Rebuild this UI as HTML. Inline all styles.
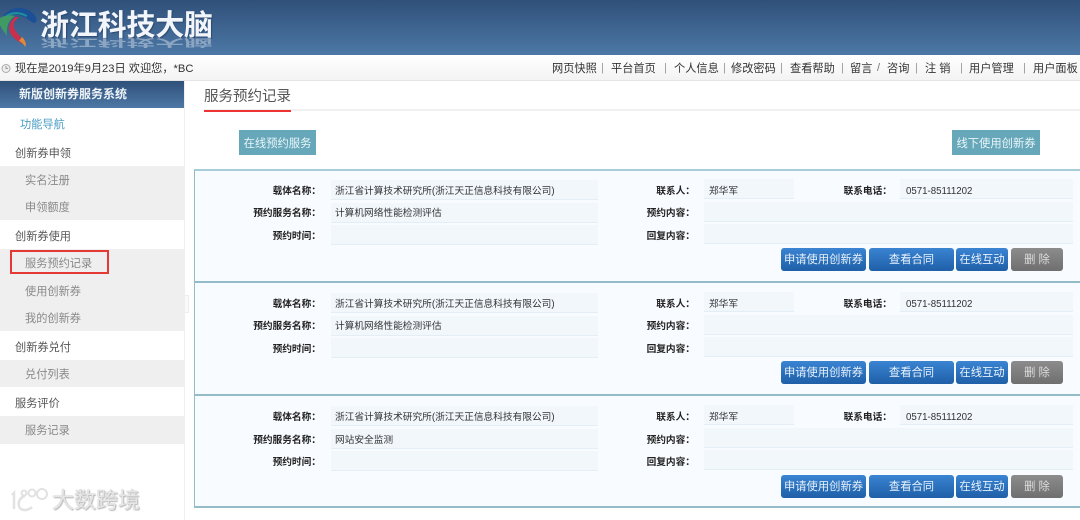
<!DOCTYPE html>
<html lang="zh"><head><meta charset="utf-8"><title>服务预约记录</title>
<style>
html,body{margin:0;padding:0;background:#fff}
body{width:1080px;height:520px;position:relative;overflow:hidden;font-family:"Liberation Sans","Noto Sans CJK SC",sans-serif;font-size:12px;color:#333}
.a{position:absolute;white-space:nowrap}
#hd{left:0;top:0;width:1080px;height:55px;background:linear-gradient(#2f5079,#4d78a6)}
#bar{left:0;top:55px;width:1080px;height:26px;background:linear-gradient(#fff,#f3f3f3);border-bottom:1px solid #e4e4e4;box-sizing:border-box}
.t{top:62px;font-size:11.2px;line-height:15px;color:#333}
.p{top:61px;font-size:11px;line-height:15px;color:#999}
.side{left:0;width:184px;background:#efefef}
.g{left:15px;font-size:11.2px;line-height:16px;color:#555}
.s{left:25px;font-size:11.2px;line-height:16px;color:#888}
.card{left:194px;width:886px;height:113px;box-sizing:border-box;background:#f8fbff;border-top:2px solid #93bcc8;border-left:1px solid #93bcc8}
.l{font-size:9.7px;font-weight:bold;color:#222;line-height:14px;text-align:right}
.f{background:#f2f7fc;border-bottom:1px solid #e3eef6;box-sizing:border-box}
.v{font-size:9.7px;color:#333;line-height:14px}
.b{height:23px;line-height:25px;text-align:center;color:#e8f2fb;font-size:11.3px;border-radius:3px;background:linear-gradient(#3a84d2,#1f5fa8);box-sizing:border-box}
.d{background:linear-gradient(#8c8c8c,#6f6f6f);color:#ddd}
.tb{height:25px;line-height:28px;background:#66a8ba;color:#eaf5f8;text-align:center;font-size:11.3px}
</style></head><body>
<div id="hd" class="a"></div>
<svg class="a" style="left:0;top:0" width="40" height="50" viewBox="0 0 40 50">
<path d="M2 18C8 8 20 5 30 11C35 14 38 19 36 22C33 25 30 20 26 18C18 13 10 14 2 18Z" fill="#1b4f96"/>
<path d="M6 15C12 11 20 11 27 15C28 17 26 17 24 16C18 13 11 14 4 18Z" fill="#1c8f9e"/>
<path d="M0 18C5 15 10 15 15 16C9 20 6 26 7 36C4 32 1 28 0 25Z" fill="#3f9a63"/>
<path d="M15 17C8 23 7 31 14 38C17 41 20 42 22 44C24 43 22 39 19 35C13 29 11 23 19 17Z" fill="#c8304c"/>
<path d="M19 41C21 42 24 44 25 47C27 44 25 40 22 37Z" fill="#e08b3a"/>
</svg>
<div class="a" style="left:40px;top:9px;font-size:29px;line-height:34px;font-weight:bold;color:#f2f6fa;letter-spacing:-.2px;text-shadow:1px 1px 1px #2c4a70">浙江科技大脑</div>
<div class="a" style="left:40px;top:38px;height:10px;width:175px;overflow:hidden;opacity:.45"><div style="margin-top:-13px;font-size:29px;line-height:34px;font-weight:bold;color:#dfe8f1;transform:scaleY(-.35);transform-origin:0 17px;letter-spacing:-.2px">浙江科技大脑</div></div>

<div id="bar" class="a"></div>
<svg class="a" style="left:1px;top:63px" width="10" height="11" viewBox="0 0 10 11"><circle cx="5" cy="5.5" r="4" fill="#eee" stroke="#aaa"/><path d="M5 3v2.5h2" fill="none" stroke="#999"/></svg>
<div class="a t" style="left:15px">现在是2019年9月23日 欢迎您，*BC</div>
<div class="a t" style="left:552px">网页快照</div><div class="a p" style="left:601px">|</div>
<div class="a t" style="left:611px">平台首页</div><div class="a p" style="left:664px">|</div>
<div class="a t" style="left:674px">个人信息</div><div class="a p" style="left:723px">|</div>
<div class="a t" style="left:731px">修改密码</div><div class="a p" style="left:780px">|</div>
<div class="a t" style="left:790px">查看帮助</div><div class="a p" style="left:841px">|</div>
<div class="a t" style="left:850px">留言</div><div class="a p" style="left:877px;color:#777">/</div>
<div class="a t" style="left:887px">咨询</div><div class="a p" style="left:915px">|</div>
<div class="a t" style="left:925px">注 销</div><div class="a p" style="left:960px">|</div>
<div class="a t" style="left:969px">用户管理</div><div class="a p" style="left:1023px">|</div>
<div class="a t" style="left:1033px">用户面板</div>

<div class="a" style="left:0;top:81px;width:184px;height:27px;background:linear-gradient(#2f5079,#4d78a6);color:#eef3f8;font-weight:bold;font-size:12px;line-height:26px;text-indent:19px">新版创新券服务系统</div>
<div class="a" style="left:184px;top:81px;width:1px;height:439px;background:#eee"></div>
<div class="a" style="left:20px;top:117px;font-size:11.2px;line-height:16px;color:#4a9cc4">功能导航</div>

<div class="a g" style="top:146px">创新券申领</div>
<div class="a side" style="top:166px;height:54px"></div>
<div class="a s" style="top:173px">实名注册</div>
<div class="a s" style="top:200px">申领额度</div>
<div class="a g" style="top:229px">创新券使用</div>
<div class="a side" style="top:249px;height:82px"></div>
<div class="a" style="left:10px;top:250px;width:99px;height:24px;box-sizing:border-box;border:2px solid #e53935"></div>
<div class="a s" style="top:256px">服务预约记录</div>
<div class="a s" style="top:284px">使用创新券</div>
<div class="a s" style="top:311px">我的创新券</div>
<div class="a g" style="top:340px">创新券兑付</div>
<div class="a side" style="top:360px;height:27px"></div>
<div class="a s" style="top:367px">兑付列表</div>
<div class="a g" style="top:396px">服务评价</div>
<div class="a side" style="top:416px;height:28px"></div>
<div class="a s" style="top:423px">服务记录</div>
<div class="a" style="left:184px;top:295px;width:5px;height:18px;background:#fafafa;border:1px solid #eee;box-sizing:border-box"></div>

<svg class="a" style="left:9px;top:487px" width="40" height="26" viewBox="0 0 40 26" fill="none" stroke="#e2e2e2" stroke-width="2.5"><path d="M3 8L5 6V22"/><path d="M16 9C9 11 8 19 12 22C15 24 20 23 23 20"/><circle cx="15" cy="6" r="2.5" stroke-width="2"/><circle cx="23" cy="6" r="3.5" stroke-width="2"/><circle cx="33" cy="7" r="5" stroke-width="2"/></svg>
<div class="a" style="left:52px;top:488px;font-size:22px;line-height:25px;color:#e6e6e6;text-shadow:0 0 1px #aaa,1px 1px 1px #bbb">大数跨境</div>

<div class="a" style="left:204px;top:87px;font-size:14.5px;line-height:20px;color:#555">服务预约记录</div>
<div class="a" style="left:204px;top:109px;width:876px;height:2px;background:#f0f0f0"></div>
<div class="a" style="left:204px;top:110px;width:87px;height:2px;background:#e33"></div>
<div class="a tb" style="left:239px;top:130px;width:77px">在线预约服务</div>
<div class="a tb" style="left:952px;top:130px;width:88px">线下使用创新券</div>

<!-- Card 1 -->
<div class="a card" style="top:169px;border-top-color:#a8cdd9"></div>
<div class="a f" style="left:331px;top:180px;width:267px;height:20px"></div>
<div class="a f" style="left:331px;top:203px;width:267px;height:20px"></div>
<div class="a f" style="left:331px;top:225px;width:267px;height:20px"></div>
<div class="a f" style="left:704px;top:179px;width:90px;height:20px"></div>
<div class="a f" style="left:900px;top:179px;width:173px;height:20px"></div>
<div class="a f" style="left:704px;top:202px;width:369px;height:20px"></div>
<div class="a f" style="left:704px;top:224px;width:369px;height:20px"></div>
<div class="a l" style="right:759px;top:185px">载体名称：</div>
<div class="a l" style="right:759px;top:207px">预约服务名称：</div>
<div class="a l" style="right:759px;top:230px">预约时间：</div>
<div class="a v" style="left:335px;top:185px">浙江省计算技术研究所(浙江天正信息科技有限公司)</div>
<div class="a v" style="left:335px;top:207px">计算机网络性能检测评估</div>
<div class="a l" style="right:385px;top:185px">联系人：</div>
<div class="a l" style="right:385px;top:207px">预约内容：</div>
<div class="a l" style="right:385px;top:230px">回复内容：</div>
<div class="a v" style="left:709px;top:185px">郑华军</div>
<div class="a l" style="right:188px;top:185px">联系电话：</div>
<div class="a v" style="left:906px;top:185px">0571-85111202</div>
<div class="a b" style="left:781px;top:248px;width:85px">申请使用创新券</div>
<div class="a b" style="left:869px;top:248px;width:85px">查看合同</div>
<div class="a b" style="left:956px;top:248px;width:52px">在线互动</div>
<div class="a b d" style="left:1011px;top:248px;width:52px">删 除</div>

<!-- Card 2 -->
<div class="a card" style="top:281px"></div>
<div class="a f" style="left:331px;top:293px;width:267px;height:20px"></div>
<div class="a f" style="left:331px;top:316px;width:267px;height:20px"></div>
<div class="a f" style="left:331px;top:338px;width:267px;height:20px"></div>
<div class="a f" style="left:704px;top:292px;width:90px;height:20px"></div>
<div class="a f" style="left:900px;top:292px;width:173px;height:20px"></div>
<div class="a f" style="left:704px;top:315px;width:369px;height:20px"></div>
<div class="a f" style="left:704px;top:337px;width:369px;height:20px"></div>
<div class="a l" style="right:759px;top:298px">载体名称：</div>
<div class="a l" style="right:759px;top:320px">预约服务名称：</div>
<div class="a l" style="right:759px;top:343px">预约时间：</div>
<div class="a v" style="left:335px;top:298px">浙江省计算技术研究所(浙江天正信息科技有限公司)</div>
<div class="a v" style="left:335px;top:320px">计算机网络性能检测评估</div>
<div class="a l" style="right:385px;top:298px">联系人：</div>
<div class="a l" style="right:385px;top:320px">预约内容：</div>
<div class="a l" style="right:385px;top:343px">回复内容：</div>
<div class="a v" style="left:709px;top:298px">郑华军</div>
<div class="a l" style="right:188px;top:298px">联系电话：</div>
<div class="a v" style="left:906px;top:298px">0571-85111202</div>
<div class="a b" style="left:781px;top:361px;width:85px">申请使用创新券</div>
<div class="a b" style="left:869px;top:361px;width:85px">查看合同</div>
<div class="a b" style="left:956px;top:361px;width:52px">在线互动</div>
<div class="a b d" style="left:1011px;top:361px;width:52px">删 除</div>

<!-- Card 3 -->
<div class="a card" style="top:394px;height:114px;border-bottom:2px solid #93bcc8"></div>
<div class="a f" style="left:331px;top:406px;width:267px;height:20px"></div>
<div class="a f" style="left:331px;top:429px;width:267px;height:20px"></div>
<div class="a f" style="left:331px;top:451px;width:267px;height:20px"></div>
<div class="a f" style="left:704px;top:405px;width:90px;height:20px"></div>
<div class="a f" style="left:900px;top:405px;width:173px;height:20px"></div>
<div class="a f" style="left:704px;top:428px;width:369px;height:20px"></div>
<div class="a f" style="left:704px;top:450px;width:369px;height:20px"></div>
<div class="a l" style="right:759px;top:411px">载体名称：</div>
<div class="a l" style="right:759px;top:434px">预约服务名称：</div>
<div class="a l" style="right:759px;top:456px">预约时间：</div>
<div class="a v" style="left:335px;top:411px">浙江省计算技术研究所(浙江天正信息科技有限公司)</div>
<div class="a v" style="left:335px;top:434px">网站安全监测</div>
<div class="a l" style="right:385px;top:411px">联系人：</div>
<div class="a l" style="right:385px;top:434px">预约内容：</div>
<div class="a l" style="right:385px;top:456px">回复内容：</div>
<div class="a v" style="left:709px;top:411px">郑华军</div>
<div class="a l" style="right:188px;top:411px">联系电话：</div>
<div class="a v" style="left:906px;top:411px">0571-85111202</div>
<div class="a b" style="left:781px;top:475px;width:85px">申请使用创新券</div>
<div class="a b" style="left:869px;top:475px;width:85px">查看合同</div>
<div class="a b" style="left:956px;top:475px;width:52px">在线互动</div>
<div class="a b d" style="left:1011px;top:475px;width:52px">删 除</div>
</body></html>
